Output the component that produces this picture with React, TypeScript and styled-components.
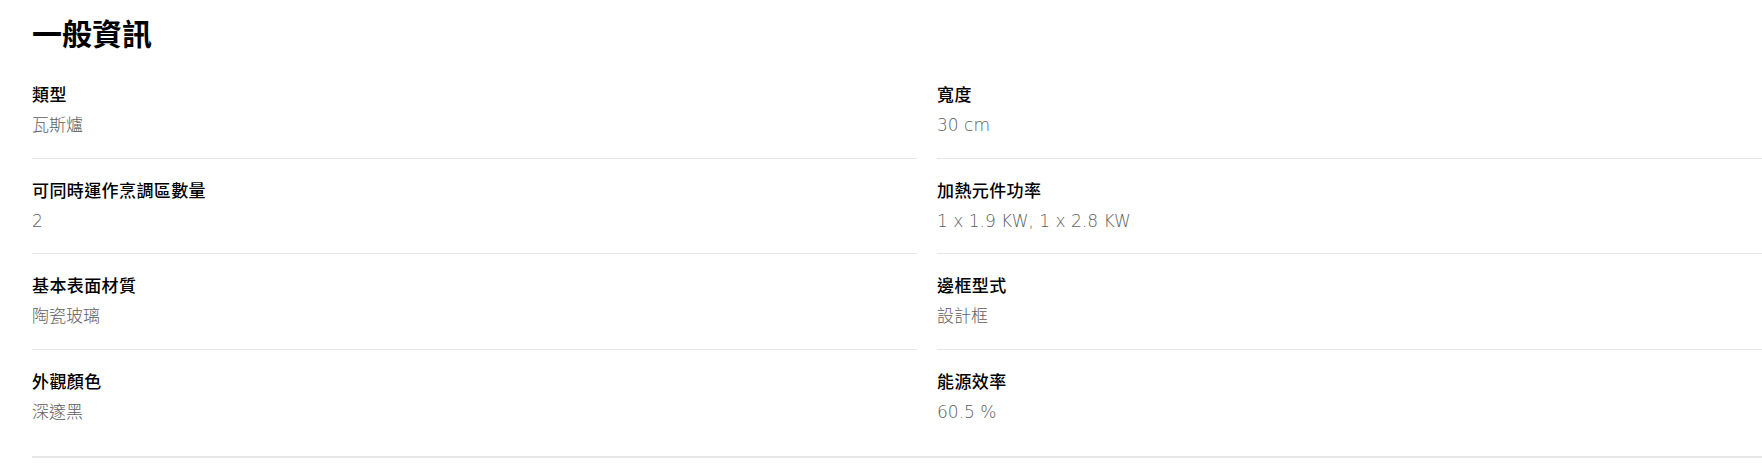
import React from 'react';
import styled, { createGlobalStyle } from 'styled-components';

const GlobalStyle = createGlobalStyle`
  html, body {
    margin: 0;
    padding: 0;
    background: #ffffff;
    overflow: hidden;
  }

  body {
    font-family: 'DejaVu Sans', 'Noto Sans CJK TC', sans-serif;
    color: #000000;
  }
`;

type Spec = { label: string; value: string };

const specs: Spec[] = [
  { label: '類型', value: '瓦斯爐' },
  { label: '寬度', value: '30 cm' },
  { label: '可同時運作烹調區數量', value: '2' },
  { label: '加熱元件功率', value: '1 x 1.9 KW, 1 x 2.8 KW' },
  { label: '基本表面材質', value: '陶瓷玻璃' },
  { label: '邊框型式', value: '設計框' },
  { label: '外觀顏色', value: '深邃黑' },
  { label: '能源效率', value: '60.5 %' },
];

const App = () => {
  const lastRowStart = specs.length - 2;

  return (
    <>
      <GlobalStyle />
      <Section>
        <SectionTitle>一般資訊</SectionTitle>
        <SpecGrid>
          {specs.map((spec, i) => (
            <SpecItem key={spec.label} last={i >= lastRowStart}>
              <SpecLabel>{spec.label}</SpecLabel>
              <SpecValue>{spec.value}</SpecValue>
            </SpecItem>
          ))}
        </SpecGrid>
      </Section>
    </>
  );
};

const Section = styled.section`
  width: 1790px;
  padding: 13px 0 0 32px;
`;

const SectionTitle = styled.h2`
  margin: 0 0 11px 0;
  font-family: 'Noto Sans CJK TC', sans-serif;
  font-size: 30px;
  line-height: 39px;
  font-weight: 700;
  color: #000000;
`;

const SpecGrid = styled.div`
  display: grid;
  grid-template-columns: 885px 885px;
  column-gap: 20px;

  padding-bottom: 11px;
  border-bottom: 2px solid #e6e7e9;
`;

const SpecItem = styled.div<{ last?: boolean }>`
  display: flex;
  flex-direction: column;
  gap: 7px;

  height: 95.5px;
  box-sizing: border-box;
  padding-top: 19px;

  border-bottom: ${(p) => (p.last ? 'none' : '1px solid #e6e7e9')};
`;

const SpecLabel = styled.p`
  margin: 0;
  font-family: 'Noto Sans CJK TC', sans-serif;
  font-size: 17px;
  line-height: 24px;
  letter-spacing: 0.4px;
  font-weight: 500;
  color: #000000;
`;

const SpecValue = styled.p`
  margin: 0;
  font-family: 'DejaVu Sans', 'Noto Sans CJK TC', sans-serif;
  font-size: 17px;
  line-height: 24px;
  font-weight: 200;
  color: #5e5e5e;
`;

export default App;
